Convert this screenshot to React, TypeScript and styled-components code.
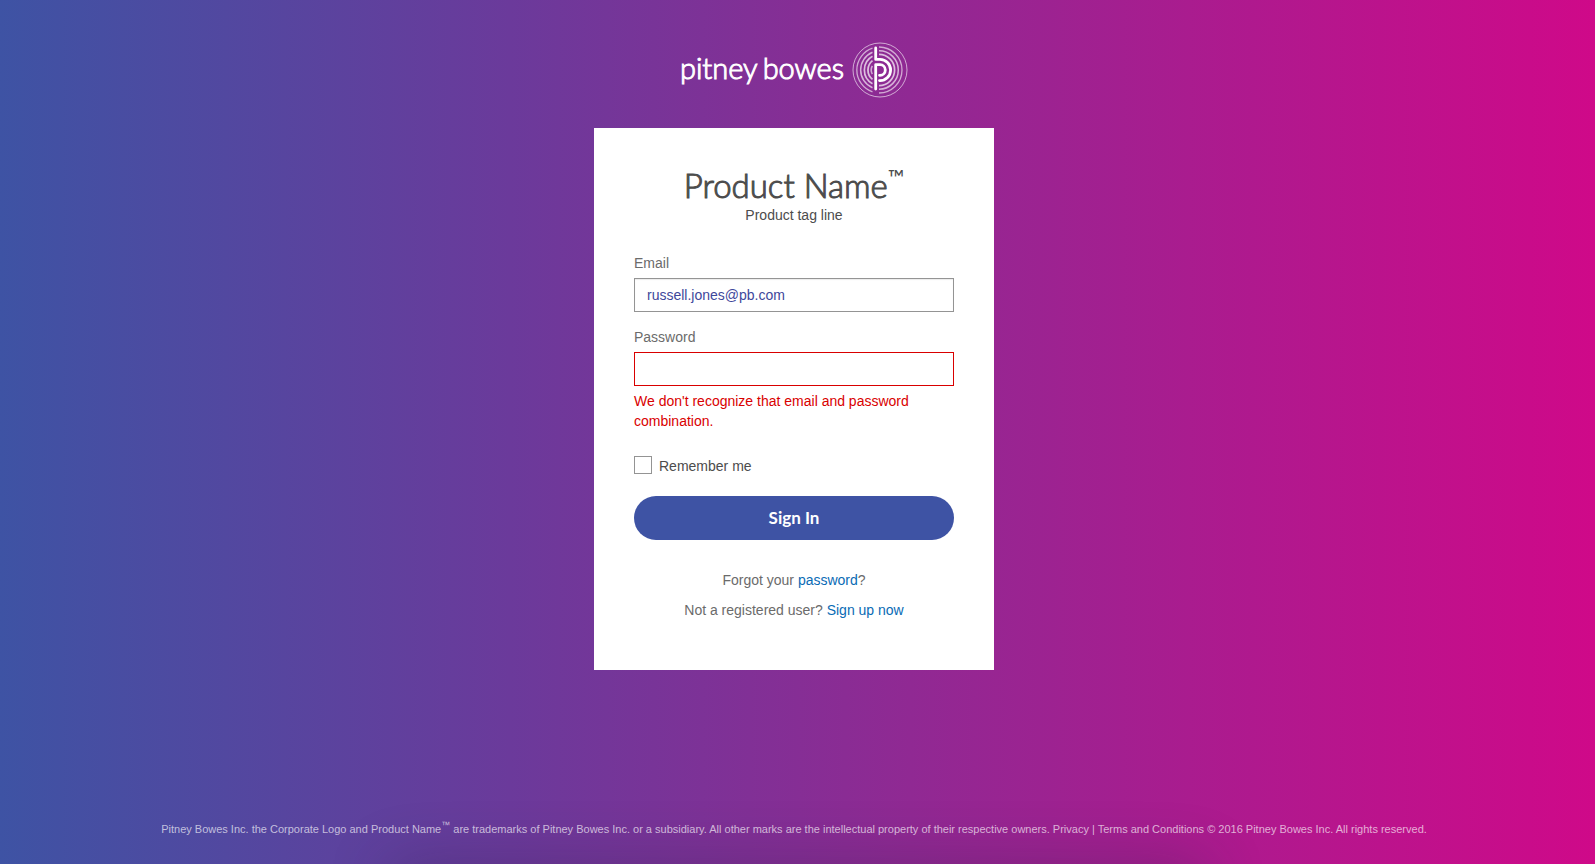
import React from 'react';
import styled, { createGlobalStyle } from 'styled-components';

const sans = '"Liberation Sans", Helvetica, Arial, sans-serif';
const display = 'Lato, "Open Sans", sans-serif';

const GlobalStyle = createGlobalStyle`
  *, *::before, *::after { box-sizing: border-box; }
  body {
    margin: 0;
    color: #4c4c4c;
    font: 14px/20px ${sans};
  }
`;

const Page = styled.div`
  position: relative;
  isolation: isolate;
  overflow: hidden;
  display: flex;
  flex-direction: column;
  align-items: center;
  min-height: 100vh;
  padding: 40px 7px 23px 0;
  background: linear-gradient(to right, #3e53a4 0%, #6b3a9b 32%, #8a2c94 53%, #cf0989 100%);

  /* soft shade along the bottom edge */
  &::after {
    content: '';
    position: absolute;
    z-index: -1;
    bottom: -40px;
    left: 25%;
    right: 25%;
    height: 30px;
    box-shadow: 0 0 60px 10px rgba(40, 30, 70, 0.3);
  }
`;

const Brand = styled.header`
  display: flex;
  align-items: center;
  gap: 8px;
  height: 60px;
  margin-bottom: 28px;
  color: #fff;
`;

const Wordmark = styled.span`
  display: flex;
  gap: 5px;
  padding-bottom: 5px;
  font: 300 29px/40px ${display};
  -webkit-text-stroke: 1px #fff;
`;

const Emblem = styled.svg`
  width: 56px;
  height: 56px;
  fill: none;
  stroke: #fff;
`;

const Card = styled.main`
  display: flex;
  flex-direction: column;
  width: 400px;
  max-width: 100%;
  padding: 37px 40px 50px;
  background: #fff;
`;

const Title = styled.h1`
  margin: 0;
  font: 300 33px/40px ${display};
  text-align: center;
  -webkit-text-stroke: 1px #4c4c4c;
`;

const TitleMark = styled.sup`
  font-size: 22px;
  font-weight: 400;
  line-height: 0;
  -webkit-text-stroke: 0;
`;

const Tagline = styled.p`
  margin: 0 0 28px;
  text-align: center;
`;

const Form = styled.form`
  display: flex;
  flex-direction: column;
`;

const Field = styled.div`
  display: flex;
  flex-direction: column;
  gap: 5px;
  margin-bottom: 15px;
`;

const Label = styled.label`
  color: #6b6b6b;
`;

const Input = styled.input<{ $invalid?: boolean }>`
  width: 100%;
  height: 34px;
  padding: 0 12px;
  border: 1px solid ${(p) => (p.$invalid ? '#d90000' : '#949494')};
  border-radius: 0;
  background: #fff;
  box-shadow: ${(p) => (p.$invalid ? 'none' : 'inset 0 1px 1px rgba(0, 0, 0, 0.08)')};
  color: #3e479b;
  font: 14px/20px ${sans};
  outline: none;
`;

const ErrorText = styled.p`
  margin: 0 0 10px;
  color: #d90000;
`;

const Remember = styled.label`
  display: flex;
  align-items: flex-start;
  gap: 7px;
  margin-bottom: 20px;
`;

const Checkbox = styled.input`
  appearance: none;
  width: 18px;
  height: 18px;
  margin: 0;
  border: 1px solid #949494;
  background: #fff;

  &:checked {
    box-shadow: inset 0 0 0 3px #fff;
    background: #3e53a4;
  }
`;

const SubmitButton = styled.button`
  height: 44px;
  margin-bottom: 30px;
  border: 0;
  border-radius: 22px;
  background: #3e53a4;
  color: #fff;
  font: 700 17px/24px ${display};
  cursor: pointer;
`;

const HelpLine = styled.p`
  margin: 0 0 10px;
  color: #6b6b6b;
  text-align: center;

  &:last-child { margin-bottom: 0; }
`;

const Link = styled.a`
  color: #0a6bb5;
  text-decoration: none;
`;

const Footer = styled.footer`
  margin-top: auto;
  padding: 0 16px;
  color: rgba(255, 255, 255, 0.66);
  font: 11px/24px ${sans};
  text-align: center;
`;

const FooterMark = styled.sup`
  font-size: 9px;
  line-height: 0;
`;

const FooterLink = styled.a`
  color: inherit;
  text-decoration: none;
`;

const PitneyEmblem = () => (
  <Emblem viewBox="0 0 56 56" aria-hidden="true">
    <circle cx="28" cy="28" r="27" strokeWidth="1" opacity="0.6" />
    <path d="M20.5 6.2A23 23 0 0 0 20.5 49.8M27 5A23 23 0 1 1 27 51" strokeWidth="1.3" opacity="0.6" />
    <path d="M20.5 10.2A19.3 19.3 0 0 0 20.5 45.8M27 8.7A19.3 19.3 0 1 1 27 47.3" strokeWidth="1.5" opacity="0.65" />
    <path d="M20.5 14.3A15.6 15.6 0 0 0 20.5 41.7M27 12.4A15.6 15.6 0 1 1 27 43.6" strokeWidth="1.7" opacity="0.7" />
    <path d="M20.5 18.6A12 12 0 0 0 20.5 37.4" strokeWidth="1.8" opacity="0.7" />
    <path d="M20.3 23.8A8.8 8.8 0 0 0 20.3 32.2" strokeWidth="1.6" opacity="0.6" />
    <path d="M23.7 6V17.4H28A10.6 10.6 0 0 1 28 38.6H27.5" strokeWidth="2.8" strokeLinecap="round" strokeLinejoin="round" />
    <path d="M23.7 47V22.7H28A5.3 5.3 0 0 1 28 33.3H27.5" strokeWidth="2.8" strokeLinecap="round" strokeLinejoin="round" />
  </Emblem>
);

export default function App() {
  return (
    <>
      <GlobalStyle />
      <Page>
        <Brand>
          <Wordmark>
            <span>pitney</span>
            <span>bowes</span>
          </Wordmark>
          <PitneyEmblem />
        </Brand>
        <Card>
          <Title>
            Product Name<TitleMark>™</TitleMark>
          </Title>
          <Tagline>Product tag line</Tagline>
          <Form onSubmit={(e) => e.preventDefault()}>
            <Field>
              <Label htmlFor="email">Email</Label>
              <Input id="email" type="email" defaultValue="russell.jones@pb.com" />
            </Field>
            <Field>
              <Label htmlFor="password">Password</Label>
              <Input id="password" type="password" $invalid aria-invalid="true" aria-describedby="password-error" />
              <ErrorText id="password-error">
                We don't recognize that email and password combination.
              </ErrorText>
            </Field>
            <Remember>
              <Checkbox type="checkbox" />
              Remember me
            </Remember>
            <SubmitButton type="submit">Sign In</SubmitButton>
          </Form>
          <HelpLine>
            Forgot your <Link href="#password">password</Link>?
          </HelpLine>
          <HelpLine>
            Not a registered user? <Link href="#signup">Sign up now</Link>
          </HelpLine>
        </Card>
        <Footer>
          Pitney Bowes Inc. the Corporate Logo and Product Name<FooterMark>™</FooterMark> are trademarks of
          Pitney Bowes Inc. or a subsidiary. All other marks are the intellectual property of their respective
          owners. <FooterLink href="#privacy">Privacy</FooterLink> |{' '}
          <FooterLink href="#terms">Terms and Conditions</FooterLink> © 2016 Pitney Bowes Inc. All rights reserved.
        </Footer>
      </Page>
    </>
  );
}
